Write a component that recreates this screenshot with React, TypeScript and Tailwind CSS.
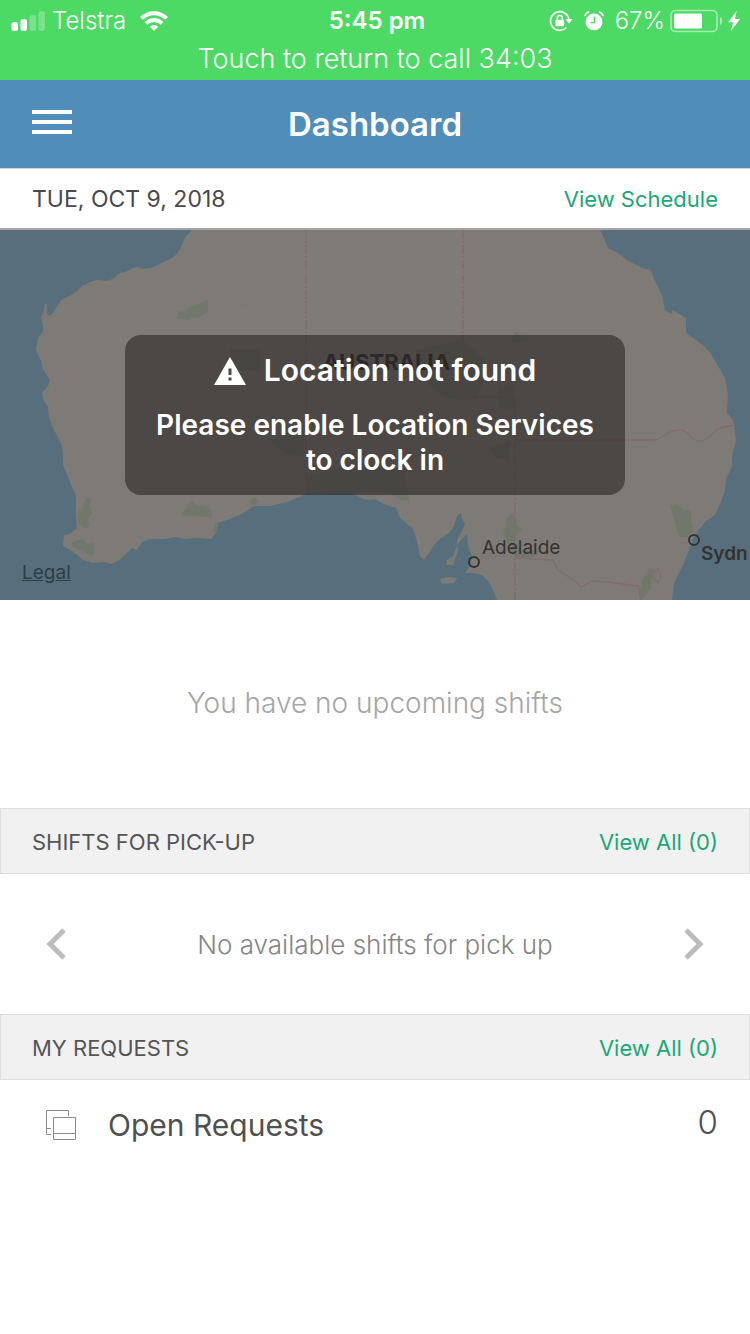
import type { ReactNode } from "react";

const WATER = "#576f7d";
const LAND = "#7e7b76";
const PARK = "#71776b";
const BORDER = "#836b6e";

function SignalBars() {
  return (
    <svg className="h-5 w-9" viewBox="0 0 36 20" fill="#fff" role="img" aria-label="Signal strength">
      <rect x="1.500" y="11" width="6.500" height="9" rx="2.500" />
      <rect x="10.500" y="8" width="6.500" height="12" rx="2.500" />
      <rect x="19.500" y="4" width="6.500" height="16" rx="2.500" opacity=".25" />
      <rect x="28.500" y="0" width="6.500" height="20" rx="2.500" opacity=".25" />
    </svg>
  );
}

function WifiIcon() {
  return (
    <svg className="h-5 w-7" viewBox="0 0 28 20" role="img" aria-label="Wi-Fi">
      <g fill="none" stroke="#fff" strokeWidth="4">
        <path d="M1.400 7.400C8.500 .4 19.500 .4 26.600 7.400" />
        <path d="M6 12.400C10.600 8 17.400 8 22 12.400" />
      </g>
      <path d="M14 20l-4.200-4.300c2.400-2.200 6-2.200 8.400 0z" fill="#fff" />
    </svg>
  );
}

function RotationLockIcon() {
  return (
    <svg className="h-[22px] w-6" viewBox="0 0 24 22" fill="none" stroke="#fff" role="img" aria-label="Rotation lock">
      <path d="M17.500 17.500A9.300 9.300 0 1 1 20 9.500" strokeWidth="1.700" />
      <path d="M16.500 9h7L20 13.800z" fill="#fff" stroke="none" />
      <rect x="6.500" y="9.800" width="8.600" height="6.400" rx="1" fill="#fff" stroke="none" />
      <path d="M8.300 10V8a2.500 2.500 0 0 1 5 0v2" strokeWidth="1.500" />
    </svg>
  );
}

function AlarmIcon() {
  return (
    <svg className="h-5 w-5" viewBox="0 0 22 22" fill="none" role="img" aria-label="Alarm">
      <circle cx="11" cy="12" r="9.300" fill="#fff" />
      <path d="M1 5.600C1.600 3.200 3.200 1.600 5.600 1M21 5.600C20.400 3.200 18.800 1.600 16.400 1" stroke="#fff" strokeWidth="1.800" />
      <path d="M11.500 6v6.800H7" stroke="#4cd964" strokeWidth="1.600" />
    </svg>
  );
}

function BatteryIcon() {
  return (
    <svg className="h-6 w-[53px]" viewBox="0 0 53 24" role="img" aria-label="Battery 67%">
      <rect x="1" y="1.500" width="46" height="21" rx="4.500" fill="none" stroke="#fff" strokeOpacity=".5" strokeWidth="1.600" />
      <rect x="4" y="4.500" width="28" height="15" rx="1.500" fill="#fff" />
      <path d="M50 8c3 1.400 3 6.600 0 8z" fill="#fff" opacity=".5" />
    </svg>
  );
}

function BoltIcon() {
  return (
    <svg className="h-5 w-3" viewBox="0 0 12 20" fill="#fff" role="img" aria-label="Charging">
      <path d="M8.600 0L0 11.300h5L3 20l9-12H7z" />
    </svg>
  );
}

function WarningIcon() {
  return (
    <svg className="h-7 w-8" viewBox="0 0 32 28" aria-hidden="true">
      <path d="M16 0l16 28H0z" fill="#fff" />
      <path d="M14.500 11.500h3v6.500h-3zM14.500 20.500h3v3h-3z" fill="#4c4846" />
    </svg>
  );
}

function RequestsIcon() {
  return (
    <svg className="h-[30px] w-[30px]" viewBox="0 0 30 30" fill="none" stroke="#8a8a8a" aria-hidden="true">
      <path d="M5 24.500H.5V.5h22V6M.5 18.500H5" />
      <path d="M7.500 7.500h22v22h-22zM7.500 23.500h22" />
    </svg>
  );
}

function Chevron({ left = false }: { left?: boolean }) {
  return (
    <svg className="h-8 w-5" viewBox="0 0 20 32" fill="none" stroke="#bdbdbd" strokeWidth="5" aria-hidden="true">
      <path d={left ? "M18 2L4 16l14 14" : "M2 2l14 14L2 30"} />
    </svg>
  );
}

function MapDrawing() {
  return (
    <svg className="block h-full w-full" viewBox="0 0 750 370" preserveAspectRatio="xMidYMid slice" aria-hidden="true">
      <rect width="750" height="370" fill={WATER} />
      <path
        fill={LAND}
        d="M192 0L185 7 181 17 177 24 172 28 160 34 151 38 143 39 137 37 131 39 125 42 120 43 113 49 106 51 97 50 90 52 82 56 76 62 69 66 61 70 56 78 53 83 50 86 47 84 47 75 45 73 43 84 41 87 43 95 43 101 38 108 36 120 41 131 43 139 50 150 48 156 42 163 43 169 48 177 49 188 54 200 61 213 63 222 63 235 68 247 72 257 76 265 76 286 77 298 70 304 64 305 63 316 69 319 76 324 83 330 93 333 104 332 112 334 119 330 126 324 132 318 137 320 142 312 150 309 165 309 175 307 185 309 197 308 211 309 215 304 218 293 230 289 242 284 254 276 270 276 287 272 300 267 306 263 350 262 357 266 366 270 375 269 384 274 396 278 400 288 405 292 413 299 417 311 420 326 424 330 429 323 434 315 441 308 449 303 454 296 457 286 461 283 462 289 465 294 461 303 457 311 458 321 453 335 446 335 447 330 453 326 456 318 461 310 467 304 468 316 472 326 470 336 465 343 473 343 482 345 488 351 493 360 497 370H672L674 354 679 343 683 335 687 325 693 309 698 301 706 291 715 285 720 274 725 261 726 249 732 236 732 225 736 212 735 201 733 190 727 183 728 164 725 148 718 136 711 124 704 116 696 110 686 103 686 88 676 82 673 80 671 84 665 80 662 65 654 49 651 40 642 38 627 30 618 23 608 18 604 8 600 0Z"
      />
      <path d="M440 349l8-2 9 1-3 5-12 1z" fill={LAND} />
      <g fill={PARK}>
        <path d="M177 89l2-8 4 1 9-6 6-2 6-3 4-1v11l-8 6-8 1-3 2-11-1z" />
        <path d="M230 119l30 1v21h-22l-8-8z" />
        <path d="M181 284l3-3 3-3v-4l5-4 6 6h7l7 4v7l-20-1-11-1z" />
        <path d="M79 280l4-2 3-10 5-1-1 9 2 7-4 6 2 7-3 3-9-6zM71 312l12-3 5 5 6-1 1 9-4 4-9-5-9-4z" />
        <path d="M250 271l5-4 5 5-4 3-5-1zM213 302l2-8 4-2-2 10z" />
        <path d="M306 247l55-15 44 9 4 30-8-1-12-7-20-1h-63z" />
        <path d="M270 210l34-9v25l-20-3zM415 120l48-10 18 17 8 11-14 33-31-3-22-20z" />
        <path d="M498 158l16-4v26l-16-3zM488 218l22-6v18l-14-2zM450 118l10-8v12z" />
        <path d="M511 107l5-5 2 1 3 2 8 1-1 5-15 2zM503 302l3-5 1-9 4-4 4 2v8l7 5-7 7v6l6 8 18 1-3 5-7 1-11 2-4-3z" />
        <path d="M670 275l8-1 5 5 8 2v11l3 7-5 8h-10l-4-15zM640 359l4-13 6-8 4 2-3 11v7l-8 10h-4z" />
      </g>
      <g fill="none" stroke={BORDER} strokeWidth="1.400">
        <path d="M306 0v263M463 0v167M515 167v203" strokeDasharray="9 2 2 2" />
        <path d="M463 167h52v43h138c9 0 10-6 20-9 13-3 14 2 19 7 8 6 11 3 18-2 9-8 10-9 25-11" />
        <path d="M515 328l38 2 5 10 15 10 8 7 11-6 16 1 30 4 3 15M651 345l7-6 3 7-3 7z" />
      </g>
      <path d="M182 119c5-19 18-27 31-34l18-6 17-6" fill="none" stroke="#7a7b79" strokeWidth="2" />
    </svg>
  );
}

function SectionHeader({ title }: { title: string }) {
  return (
    <div className="flex h-[66px] items-center justify-between border border-[#dedede] bg-[#f1f1f1] px-[31px] pt-[2px] text-[22px]">
      <h2 className="text-[#555]">{title}</h2>
      <a href="#all" className="text-[#1aa876]">View All (0)</a>
    </div>
  );
}

function City({ className, children }: { className: string; children: ReactNode }) {
  return <span className={`absolute text-[19px] leading-6 whitespace-nowrap text-[#343331] ${className}`}>{children}</span>;
}

export default function App() {
  return (
    <div className="min-h-screen bg-white font-[Inter,'Liberation_Sans',sans-serif]">
      <div className="bg-[#4cd964] text-white">
        <div className="grid h-10 grid-cols-[1fr_auto_1fr] items-center px-[10px] pt-[2px] text-2xl">
          <div className="flex items-center gap-[6px]">
            <SignalBars />
            <span className="font-light">Telstra</span>
            <span className="pl-2"><WifiIcon /></span>
          </div>
          <span className="pl-1 font-semibold">5:45 pm</span>
          <div className="flex items-center justify-end gap-[5px]">
            <RotationLockIcon />
            <span className="px-[6px]"><AlarmIcon /></span>
            <span className="font-light">67%</span>
            <BatteryIcon />
            <BoltIcon />
          </div>
        </div>
        <button type="button" className="block h-10 w-full pb-[2px] text-center text-[27px] leading-9 font-light">
          Touch to return to call 34:03
        </button>
      </div>

      <header className="grid h-22 grid-cols-[1fr_auto_1fr] items-center bg-[#508db9] px-8 text-white">
        <button type="button" aria-label="Menu" className="flex w-10 flex-col gap-[6px] pb-1">
          <span className="h-1 w-full bg-white" />
          <span className="h-1 w-full bg-white" />
          <span className="h-1 w-full bg-white" />
        </button>
        <h1 className="pt-[2px] text-[33px] font-semibold">Dashboard</h1>
      </header>

      <div className="flex h-[62px] items-center justify-between border-t border-b-2 border-t-[#c9d3da] border-b-[#a5a5a5] px-8 pt-[2px] text-[22px]">
        <span className="text-[23px] text-[#4a4a4a]">TUE, OCT 9, 2018</span>
        <a href="#schedule" className="text-[#1aa876]">View Schedule</a>
      </div>

      <section aria-label="Location" className="relative h-[370px] overflow-hidden">
        <MapDrawing />
        <span className="absolute top-[120px] left-1/2 ml-[-52px] text-[22px] leading-6 font-bold text-[#2c2b29]">AUSTRALIA</span>
        <span className="absolute top-[326px] left-1/2 ml-[93px] size-3 rounded-full border-2 border-[#343331]" />
        <City className="top-[306px] left-1/2 ml-[107px]">Adelaide</City>
        <span className="absolute top-[304px] left-1/2 ml-[313px] size-3 rounded-full border-2 border-[#343331]" />
        <City className="top-[312px] left-1/2 ml-[326px] font-semibold">Sydn</City>
        <a href="#legal" className="absolute bottom-[15px] left-[22px] text-[19px] leading-6 text-[#2f3e47] underline">Legal</a>
        <div className="absolute inset-0 flex items-center justify-center">
          <div role="alert" className="flex w-2/3 flex-col gap-5 rounded-2xl bg-[#2c2726]/60 px-6 pt-[18px] pb-[17px] text-center text-[28px] leading-[35px] font-semibold text-white">
            <p className="flex items-center justify-center gap-[18px] text-[30px]">
              <WarningIcon />
              Location not found
            </p>
            <p>
              Please enable Location Services
              <br />
              to clock in
            </p>
          </div>
        </div>
      </section>

      <p className="flex h-52 items-center justify-center pb-[2px] text-[28px] font-light text-[#a6a6a6]">You have no upcoming shifts</p>

      <section>
        <SectionHeader title="SHIFTS FOR PICK-UP" />
        <div className="flex h-[140px] items-center justify-between px-[46px] text-[26px] text-[#858585]">
          <button type="button" aria-label="Previous shift"><Chevron left /></button>
          <p className="font-light">No available shifts for pick up</p>
          <button type="button" aria-label="Next shift"><Chevron /></button>
        </div>
      </section>

      <section>
        <SectionHeader title="MY REQUESTS" />
        <a href="#requests" className="flex h-[90px] items-center pr-8 pl-[46px] text-[30px] text-[#505050]">
          <RequestsIcon />
          <span className="flex-1 pl-8">Open Requests</span>
          <span className="pb-1 text-[33px] font-light">0</span>
        </a>
      </section>
    </div>
  );
}
